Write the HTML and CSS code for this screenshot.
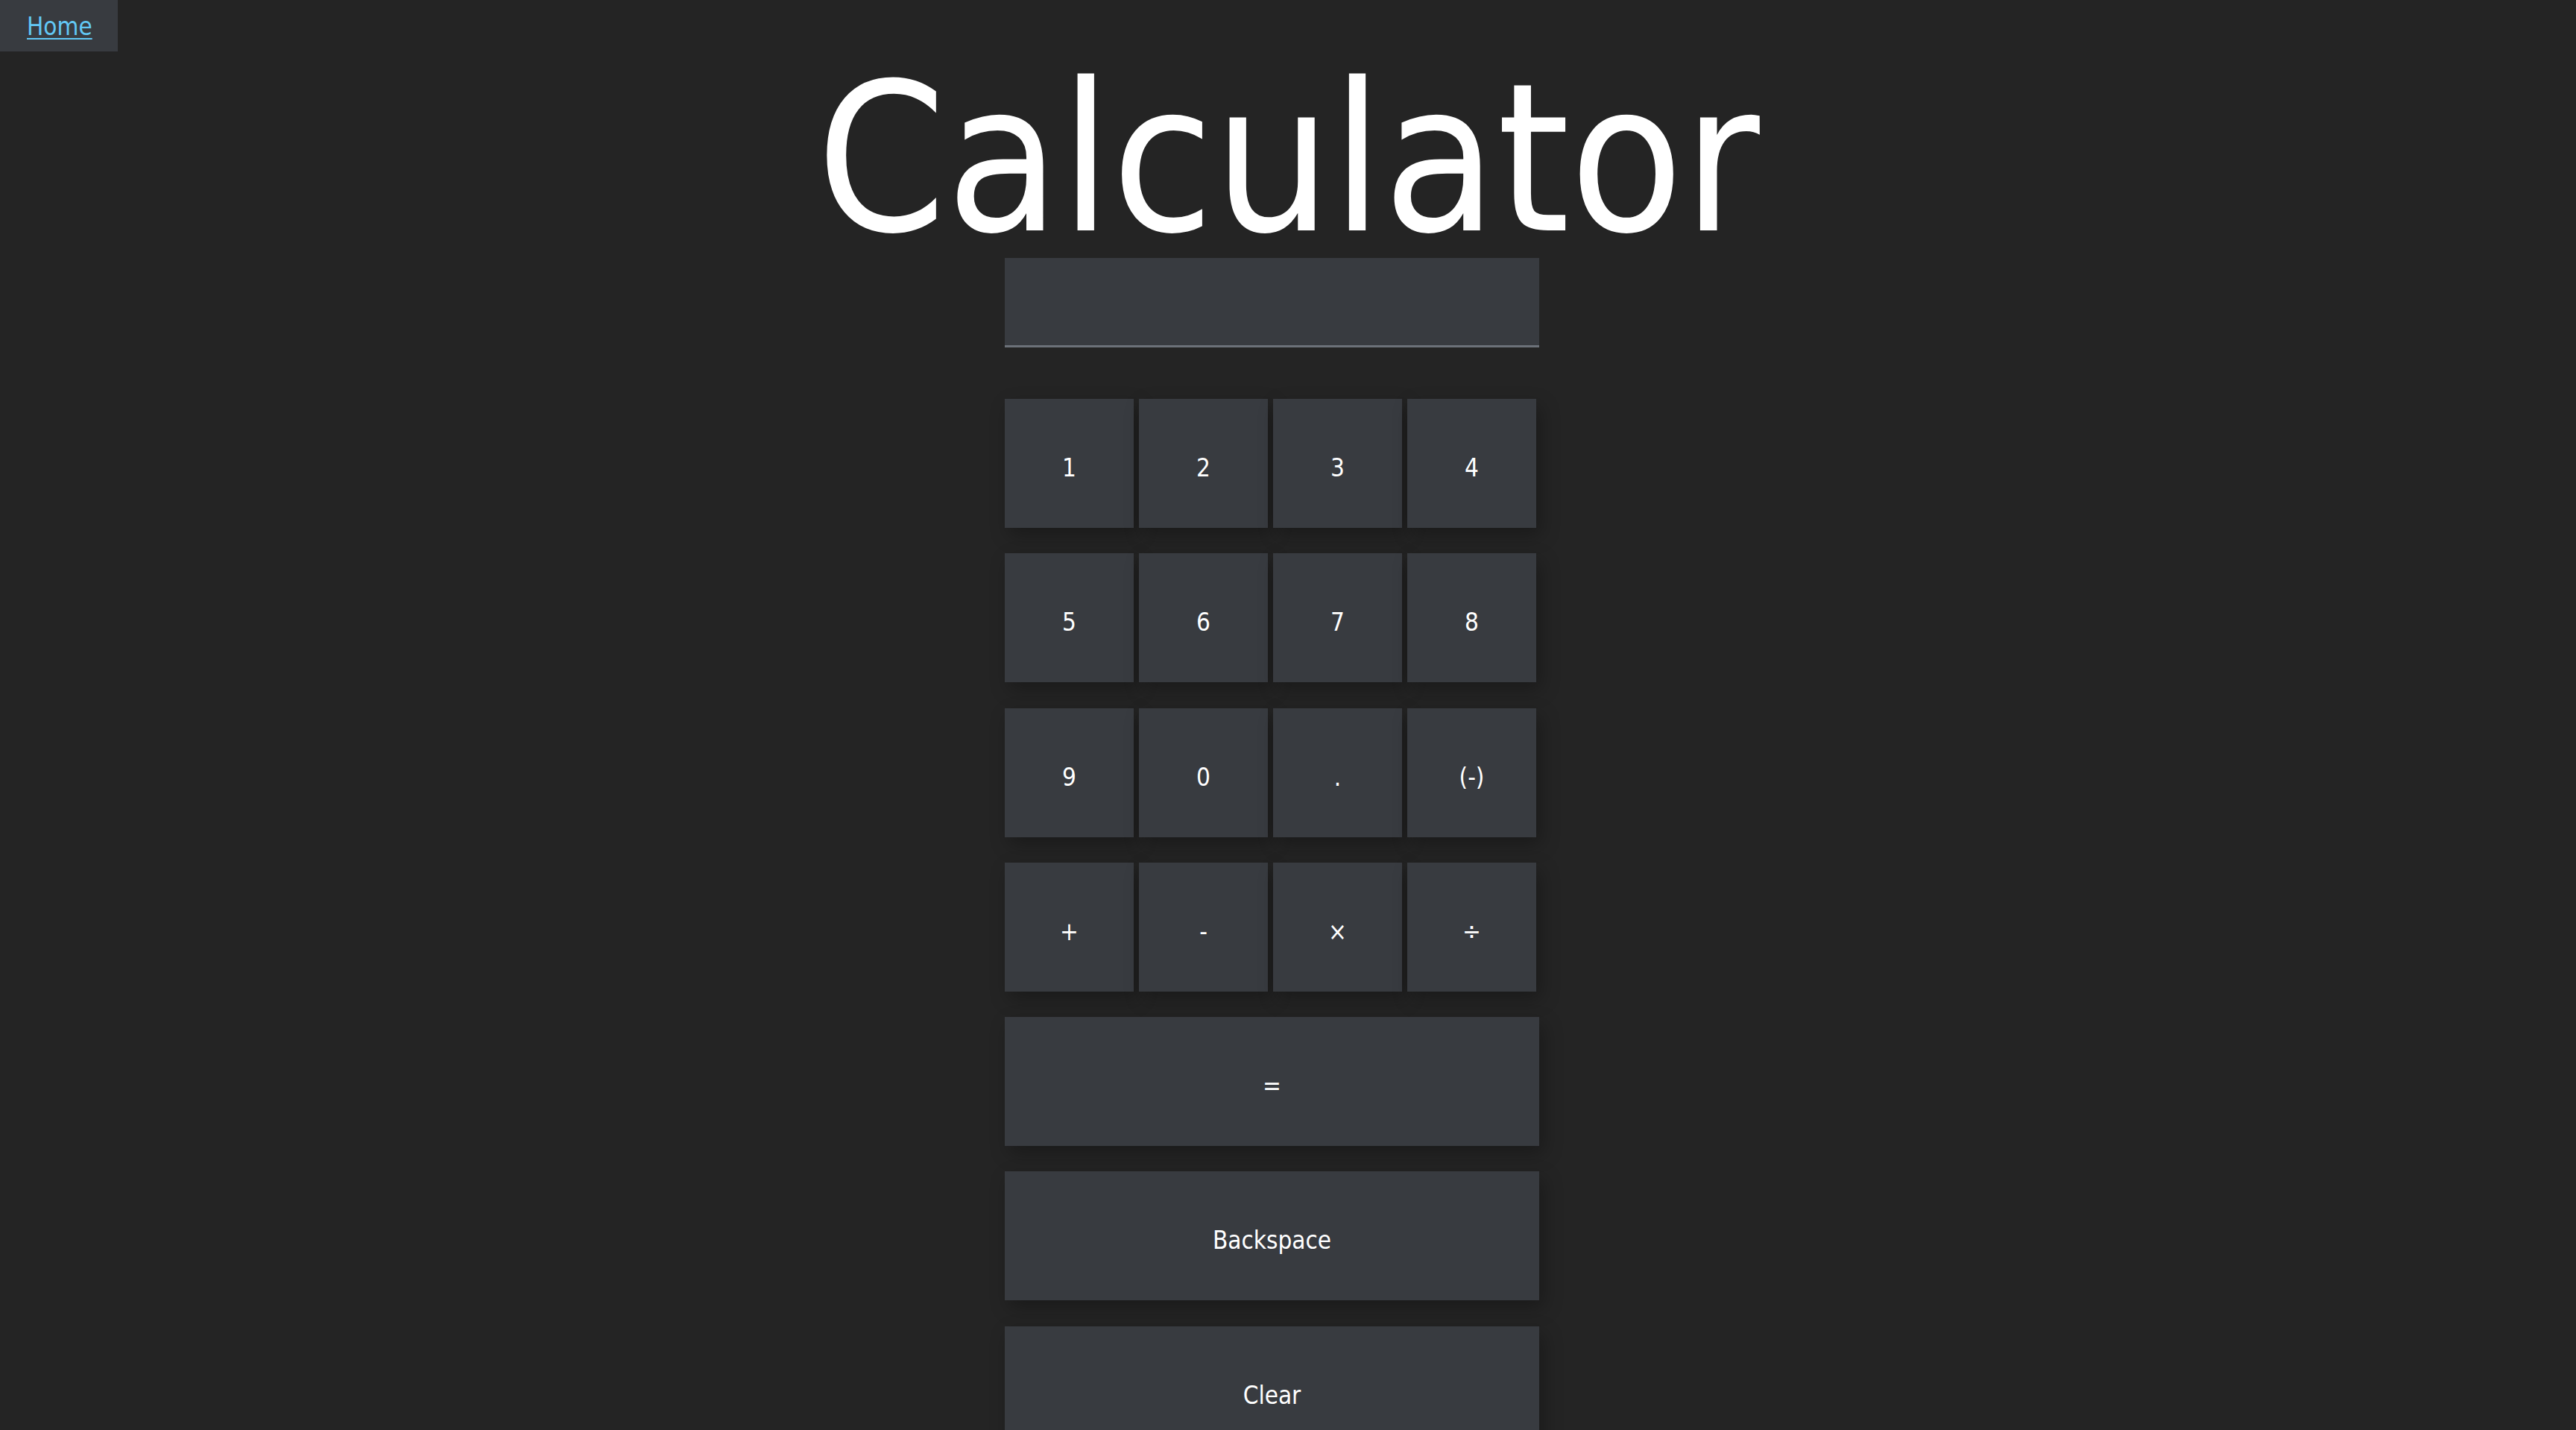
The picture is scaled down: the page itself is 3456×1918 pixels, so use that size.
FILE: index.html
```html
<!DOCTYPE html>
<html lang="en">
<head>
<meta charset="utf-8">
<title>Calculator</title>
<link rel="stylesheet" href="styles.css">
</head>
<body>
<a class="home-link" href="#">Home</a>
<main class="page">
  <h1 class="title">Calculator</h1>
  <div class="calc">
    <input class="display" type="text" aria-label="Display">
    <div class="keypad">
      <button class="key">1</button>
      <button class="key">2</button>
      <button class="key">3</button>
      <button class="key">4</button>
      <button class="key">5</button>
      <button class="key">6</button>
      <button class="key">7</button>
      <button class="key">8</button>
      <button class="key">9</button>
      <button class="key">0</button>
      <button class="key">.</button>
      <button class="key">(-)</button>
      <button class="key">+</button>
      <button class="key">-</button>
      <button class="key">×</button>
      <button class="key">÷</button>
    </div>
    <button class="key key-wide key-equals">=</button>
    <button class="key key-wide">Backspace</button>
    <button class="key key-wide">Clear</button>
  </div>
</main>
</body>
</html>
```
FILE: styles.css
```css
html, body {
  margin: 0;
  padding: 0;
  background: #242424;
}

body {
  font-family: "DejaVu Sans Condensed", "DejaVu Sans", sans-serif;
  font-stretch: condensed;
  color: #ffffff;
  overflow: hidden;
}

.home-link {
  position: absolute;
  top: 0;
  left: 0;
  box-sizing: border-box;
  width: 158px;
  height: 69px;
  padding: 1px 0 0 36px;
  line-height: 69px;
  font-size: 33px;
  color: #62c8f5;
  background: #383b40;
  text-decoration: underline;
  text-decoration-thickness: 2px;
  text-underline-offset: 4px;
}

.page {
  display: flex;
  flex-direction: column;
  align-items: center;
}

.title {
  margin: 80px 0 0;
  font-size: 277px;
  line-height: 266px;
  font-weight: 400;
  text-align: center;
}

.calc {
  width: 760px;
  display: flex;
  flex-direction: column;
  align-items: flex-start;
}

.display {
  box-sizing: border-box;
  width: 717px;
  height: 120px;
  margin: 0 0 69px;
  padding: 0 20px;
  border: 0;
  border-bottom: 3px solid #6c7179;
  background: #383b40;
  color: #ffffff;
  font: inherit;
  font-size: 33px;
  outline: none;
}

.keypad {
  display: grid;
  grid-template-columns: repeat(4, 173px);
  grid-auto-rows: 173px;
  column-gap: 7px;
  row-gap: 34.3px;
  margin-bottom: 34.3px;
}

.key {
  box-sizing: border-box;
  margin: 0;
  padding: 12px 0 0;
  border: 0;
  background: #383b40;
  color: #ffffff;
  font-family: inherit;
  font-stretch: condensed;
  font-size: 33px;
  font-weight: 400;
  box-shadow: 6px 10px 24px rgba(0, 0, 0, 0.28);
  cursor: pointer;
}

.key-wide {
  width: 717px;
  height: 173px;
  margin-bottom: 34.3px;
}
```
